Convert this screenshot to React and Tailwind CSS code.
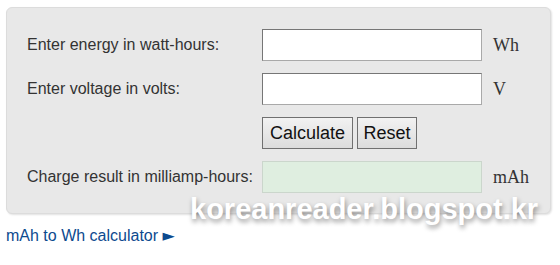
import React from "react";

const inputCls =
  "w-[220px] h-[32px] bg-white border border-t-[#767676] border-l-[#767676] border-b-[#a9a9a9] border-r-[#a9a9a9]";
const btnCls =
  "h-[32px] border border-[#707070] bg-gradient-to-b from-[#f2f2f2] to-[#dcdcdc] text-[18px] text-[#111] leading-none";

export default function App() {
  return (
    <div className="relative w-[560px] h-[265px] bg-white font-['Liberation_Sans',Arial,sans-serif]">
      <div className="pt-[7px] pl-[6px] pr-[9px]">
        <div className="w-[545px] h-[207px] rounded-[6px] bg-[#e8e8e8] border border-[#dcdcdc] shadow-[1px_1px_2px_rgba(0,0,0,0.12)] pl-[20px] pt-[21px] flex flex-col gap-[12px]">
          <div className="flex items-center h-[32px]">
            <div className="w-[235px] text-[16px] text-[#333]">Enter energy in watt-hours:</div>
            <div className={inputCls} />
            <div className="ml-[11px] text-[18px] text-[#333] font-['Liberation_Serif',serif]">Wh</div>
          </div>
          <div className="flex items-center h-[32px]">
            <div className="w-[235px] text-[16px] text-[#333]">Enter voltage in volts:</div>
            <div className={inputCls} />
            <div className="ml-[11px] text-[18px] text-[#333] font-['Liberation_Serif',serif]">V</div>
          </div>
          <div className="flex items-center h-[32px]">
            <div className="w-[235px]" />
            <button className={btnCls + " w-[91px]"}>Calculate</button>
            <button className={btnCls + " w-[60px] ml-[4px]"}>Reset</button>
          </div>
          <div className="flex items-center h-[32px]">
            <div className="w-[235px] text-[16px] text-[#333]">Charge result in milliamp-hours:</div>
            <div className="w-[220px] h-[32px] bg-[#dfeee0] border border-[#cbd6cc]" />
            <div className="ml-[11px] text-[18px] text-[#333] font-['Liberation_Serif',serif]">mAh</div>
          </div>
        </div>
      </div>
      <div className="pl-[6px] mt-[13px] text-[16px] text-[#0d4a8f] leading-[18px] flex items-center">
        <span>mAh to Wh calculator&nbsp;</span>
        <span className="font-['DejaVu_Sans',sans-serif] text-[16px] leading-none">►</span>
      </div>
      <div className="absolute left-[190px] top-[195px] text-[29px] font-bold text-white leading-none font-['Liberation_Sans',Arial,sans-serif] [text-shadow:1px_3px_5px_rgba(0,0,0,0.4)]">
        koreanreader.blogspot.kr
      </div>
    </div>
  );
}
